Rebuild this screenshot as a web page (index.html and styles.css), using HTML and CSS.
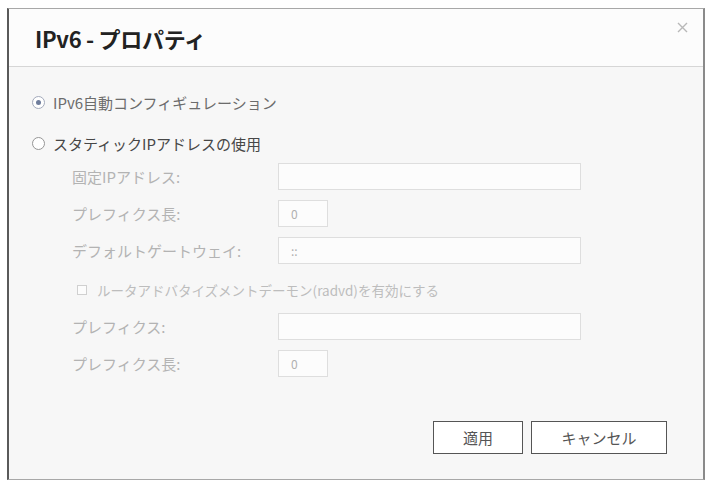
FILE: index.html
```html
<!DOCTYPE html>
<html lang="ja">
<head>
  <meta charset="UTF-8">
  <title>IPv6 - プロパティ</title>
  <link rel="stylesheet" href="styles.css">
</head>
<body>
  <div class="dialog">
    <!-- Header -->
    <div class="dialog-header">
      <h1>IPv6 - プロパティ</h1>
      <button class="close-btn" aria-label="close">
        <svg width="11" height="11" viewBox="0 0 11 11"><path d="M1 1L10 10M10 1L1 10" stroke="#b8b8b8" stroke-width="1.4"/></svg>
      </button>
    </div>

    <!-- Body -->
    <div class="dialog-body">
      <div class="radio-row auto">
        <span class="radio checked"></span>
        <span>IPv6自動コンフィギュレーション</span>
      </div>
      <div class="radio-row static">
        <span class="radio"></span>
        <span>スタティックIPアドレスの使用</span>
      </div>

      <div class="fields">
        <div class="field-row">
          <label>固定IPアドレス:</label>
          <div class="input wide"></div>
        </div>
        <div class="field-row">
          <label>プレフィクス長:</label>
          <div class="input short">0</div>
        </div>
        <div class="field-row">
          <label>デフォルトゲートウェイ:</label>
          <div class="input wide">::</div>
        </div>
        <div class="check-row">
          <span class="checkbox"></span>
          <span>ルータアドバタイズメントデーモン(radvd)を有効にする</span>
        </div>
        <div class="field-row">
          <label>プレフィクス:</label>
          <div class="input wide"></div>
        </div>
        <div class="field-row">
          <label>プレフィクス長:</label>
          <div class="input short">0</div>
        </div>
      </div>

      <div class="actions">
        <button class="btn apply">適用</button>
        <button class="btn cancel">キャンセル</button>
      </div>
    </div>
  </div>
</body>
</html>
```

FILE: styles.css
```css
* {
  margin: 0;
  padding: 0;
  box-sizing: border-box;
}
body {
  font-family: "Noto Sans CJK JP", "Noto Sans", sans-serif;
  background: #ffffff;
  color: #444;
}
.dialog {
  margin: 8px 0 0 7px;
  width: 698px;
  height: 472px;
  border: 1px solid #a8a8a8;
  border-left: 2px solid #5a5a5a;
  border-right: 2px solid #8a8a8a;
  background: #f7f7f7;
  display: flex;
  flex-direction: column;
}
.dialog-header {
  height: 58px;
  background: #fcfcfc;
  border-bottom: 1px solid #d6d6d6;
  display: flex;
  align-items: center;
  padding: 0 14px 0 26px;
  position: relative;
}
.dialog-header h1 {
  font-size: 22px;
  font-weight: bold;
  color: #222;
  letter-spacing: -0.3px;
  margin-top: 1px;
}
.close-btn {
  position: absolute;
  top: 13px;
  right: 15px;
  border: none;
  background: none;
  width: 11px;
  height: 11px;
}
.close-btn svg {
  display: block;
}
.dialog-body {
  flex: 1;
  padding: 23px 0 0 23px;
  display: flex;
  flex-direction: column;
  font-size: 15px;
}
.radio-row {
  height: 24px;
  display: flex;
  align-items: center;
  gap: 8px;
}
.radio-row.auto {
  color: #6c6c6c;
}
.radio-row.static {
  margin-top: 17px;
  color: #474747;
}
.radio {
  width: 13px;
  height: 13px;
  border: 1px solid #969696;
  border-radius: 50%;
  background: #fff;
  display: flex;
  align-items: center;
  justify-content: center;
}
.radio.checked {
  border-color: #a3aabb;
}
.radio.checked::after {
  content: "";
  width: 5px;
  height: 5px;
  border-radius: 50%;
  background: #6f7d9c;
}
.fields {
  margin-top: 8px;
  padding-left: 40px;
  display: flex;
  flex-direction: column;
  gap: 10px;
  color: #b3b3b3;
}
.field-row {
  height: 27px;
  display: flex;
  align-items: center;
}
.field-row label {
  width: 206px;
}
.input {
  height: 27px;
  border: 1px solid #dedede;
  background: #fcfcfc;
  padding-left: 12px;
  font-size: 12px;
  line-height: 25px;
  color: #b0b0b0;
}
.input.wide {
  width: 303px;
}
.input.short {
  width: 50px;
}
.check-row {
  height: 27px;
  margin-top: 2px;
  display: flex;
  align-items: center;
  gap: 10px;
  padding-left: 5px;
  font-size: 13.5px;
  color: #bdbdbd;
}
.checkbox {
  width: 10px;
  height: 10px;
  border: 1px solid #d0d0d0;
  background: #fcfcfc;
}
.actions {
  margin-top: 44px;
  padding-right: 36px;
  display: flex;
  justify-content: flex-end;
  gap: 8px;
}
.btn {
  height: 33px;
  border: 1px solid #555;
  background: #fff;
  font-family: inherit;
  font-size: 15px;
  color: #555;
}
.btn.apply {
  width: 90px;
}
.btn.cancel {
  width: 136px;
}
```
